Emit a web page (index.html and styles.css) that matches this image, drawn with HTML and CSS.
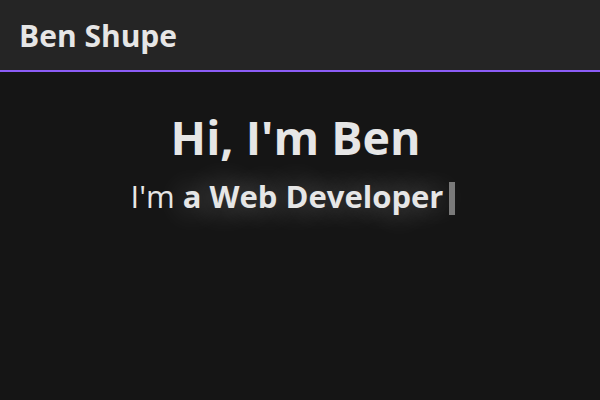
FILE: index.html
```html
<!DOCTYPE html>
<html>
<head>
<meta charset="utf-8">
<link rel="stylesheet" href="styles.css">
</head>
<body>
<header class="topbar">
  <div class="brand">Ben Shupe</div>
</header>
<main class="hero">
  <h1 class="hero-title">Hi, I'm Ben</h1>
  <p class="hero-sub"><span class="lead">I'm</span> <strong class="role">a Web Developer</strong><span class="cursor"></span></p>
</main>
</body>
</html>
```
FILE: styles.css
```css
html, body {
  margin: 0;
  padding: 0;
  height: 100%;
}
body {
  background: #151515;
  color: #e6e6e6;
  font-family: "Open Sans", "Noto Sans", sans-serif;
}
.topbar {
  height: 70px;
  background: #252525;
  border-bottom: 2px solid #8b5cf6;
  display: flex;
  align-items: center;
  padding: 0 19px;
}
.brand {
  font-size: 30px;
  font-weight: 700;
  color: #e6e6e6;
}
.hero {
  display: flex;
  flex-direction: column;
  align-items: center;
  padding-top: 38px;
  padding-right: 9px;
}
.hero-title {
  margin: 0;
  font-size: 46.5px;
  font-weight: 700;
  line-height: 55px;
}
.hero-sub {
  margin: 0;
  margin-top: 11px;
  font-size: 31px;
  line-height: 40px;
  white-space: nowrap;
}
.lead {
  font-weight: 400;
}
.role {
  font-weight: 700;
  text-shadow: 0 0 30px rgba(255, 255, 255, 0.4);
}
.cursor {
  display: inline-block;
  width: 6px;
  height: 33px;
  margin-left: 6px;
  margin-right: 5px;
  vertical-align: -7px;
  background: #7a7a7a;
}
```
